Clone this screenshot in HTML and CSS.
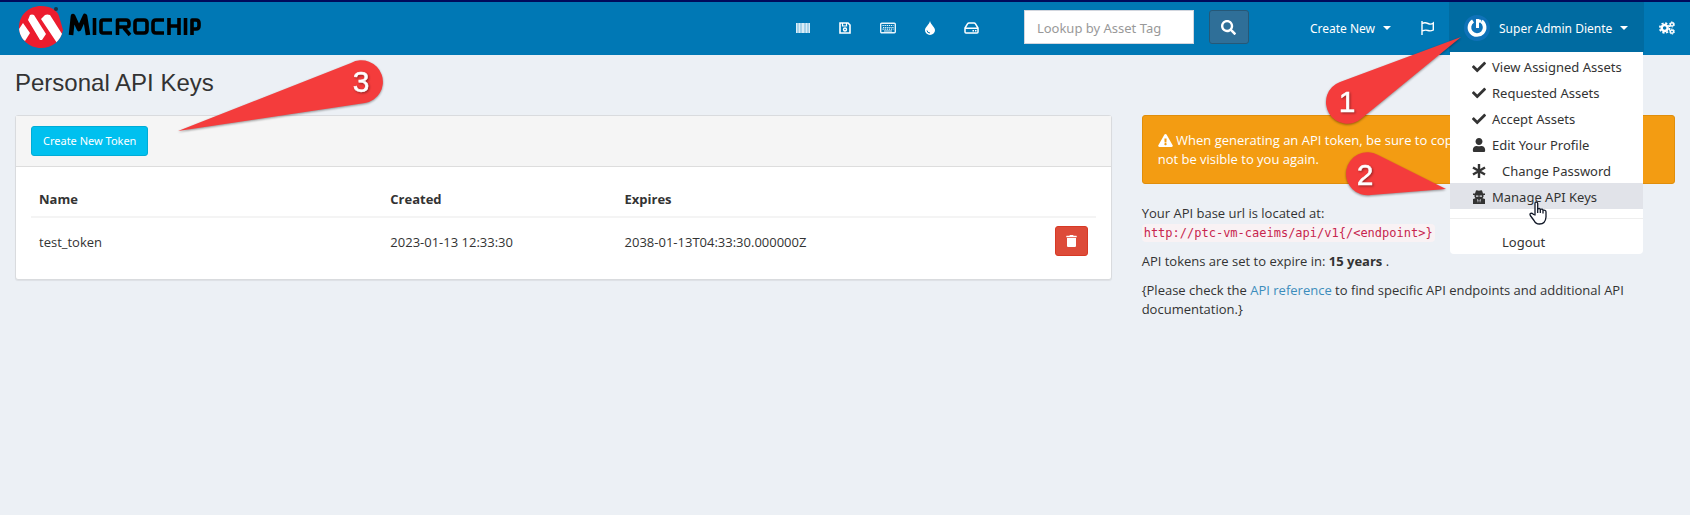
FILE: index.html
```
<!DOCTYPE html>
<html lang="en">
<head>
<meta charset="utf-8">
<title>Personal API Keys</title>
<link rel="stylesheet" href="styles.css">
</head>
<body>
<svg class="defs" aria-hidden="true">
  <symbol id="check" viewBox="0 0 512 512"><path d="M173.898 439.404l-166.4-166.4c-9.997-9.997-9.997-26.206 0-36.204l36.203-36.204c9.997-9.998 26.207-9.998 36.204 0L192 312.69 432.095 72.596c9.997-9.997 26.207-9.997 36.204 0l36.203 36.204c9.997 9.997 9.997 26.206 0 36.204l-294.4 294.401c-9.998 9.997-26.207 9.997-36.204-.001z"/></symbol>
</svg>
<header class="topbar">
  <a class="brand" href="#" aria-label="Microchip">
    <svg class="logo-mark" viewBox="0 0 48 44" aria-hidden="true">
      <defs><clipPath id="disc"><path d="M22 1C31 1 38 5 40 11L44 25C42 36 33 43 22 43C10 43 0 34 0 22S10 1 22 1Z"/></clipPath></defs>
      <g clip-path="url(#disc)">
        <rect width="48" height="44" fill="#ec1c2e"/>
        <path fill="#fff" d="M11 10Q13 9 15 10L27 29L23 35L21 35L9 15ZM26 10Q28 9 31 10L45 32L38 38L22 14ZM0 24L4 18L11 28L6 36L0 32Z"/>
      </g>
      <circle cx="37" cy="4" r="2" fill="#12344a"/>
    </svg>
    <svg class="logo-word" viewBox="0 0 134 26" aria-hidden="true">
      <g fill="none" stroke="#000" stroke-width="3.600" stroke-linejoin="round">
        <path stroke-width="4.600" d="M3 23L5 4L11 17L17 4L20 23"/>
        <path d="M26.500 6V23M44 8H35Q33 8 33 10V19Q33 21 35 21H44M49.500 23V8H58Q61 8 61 11V13Q61 15 58 15H51M56 16L62 23M69 8H76Q79 8 79 11V18Q79 21 76 21H69Q67 21 67 18V11Q67 8 69 8ZM96 8H88Q85 8 85 11V18Q85 21 88 21H96M101 6V23M101 14H111M111 6V23M117.500 6V23M124 23V8H128Q131 8 131 11V14Q131 17 128 17H125"/>
      </g>
    </svg>
  </a>
  <nav class="shortcuts" aria-label="Asset types">
    <a href="#" aria-label="Assets"><svg width="14" height="12" viewBox="0 0 14 12"><path fill="#a6d2ea" d="M0 1h14v10H0z"/><path fill="#fff" opacity=".6" d="M0 1h1v10H0zM3 1h1v10H3zM6 1h2v10H6zM10 1h1v10h-1zM13 1h1v10h-1z"/></svg></a>
    <a href="#" aria-label="Licenses"><svg width="12" height="12" viewBox="0 0 12 12" fill="none" stroke="#fff"><path stroke-width="1.600" d="M1 1h8l2 2v8H1z"/><path stroke-width="1.200" d="M3.500 1v3h4V1"/><circle cx="6" cy="7.500" r="1.500" stroke-width="1.400"/></svg></a>
    <a href="#" aria-label="Accessories"><svg width="16" height="12" viewBox="0 0 16 12" fill="none" stroke="#e8f4fb"><rect x=".7" y="1.200" width="14.600" height="9.600" rx="1" stroke-width="1.400"/><path stroke-width="1.200" stroke-dasharray="1.300 .8" d="M2.500 3.500h11M3 5.500h11M2.500 7.200h11"/><path d="M4 9h8"/></svg></a>
    <a href="#" aria-label="Consumables"><svg width="10" height="14" viewBox="0 0 10 14"><path fill="#fff" d="M5 0C6 4 10 6 10 9.200A5 4.800 0 0 1 0 9.200C0 6 4 4 5 0Z"/><path d="M2 9.500Q2.300 12 5 12" fill="none" stroke="#0078b5"/></svg></a>
    <a href="#" aria-label="Components"><svg width="15" height="12" viewBox="0 0 15 12" fill="none" stroke="#fff" stroke-width="1.500"><path d="M1 6L3.500 2Q4 1 5 1H10Q11 1 11.500 2L14 6V10Q14 11 13 11H2Q1 11 1 10ZM1 6.200H14"/><path d="M8.500 8.700h1.500M11 8.700h1.500"/></svg></a>
  </nav>
  <form class="lookup">
    <input type="text" placeholder="Lookup by Asset Tag" aria-label="Lookup by Asset Tag">
    <button type="button" aria-label="Search"><svg width="15" height="15" viewBox="0 0 512 512" fill="#fff"><path d="M505 442.700L405.300 343c-4.500-4.500-10.600-7-17-7H372c27.600-35.300 44-79.700 44-128C416 93.100 322.900 0 208 0S0 93.100 0 208s93.100 208 208 208c48.300 0 92.700-16.400 128-44v16.300c0 6.400 2.500 12.500 7 17l99.700 99.700c9.400 9.400 24.600 9.400 33.900 0l28.300-28.300c9.400-9.400 9.400-24.600.1-34zM208 336c-70.700 0-128-57.200-128-128 0-70.700 57.200-128 128-128 70.700 0 128 57.200 128 128 0 70.700-57.200 128-128 128z"/></svg></button>
  </form>
  <nav class="account" aria-label="Account">
    <a class="nav-item" href="#">Create New <span class="caret"></span></a>
    <a class="nav-item" href="#" aria-label="Alerts"><svg width="13" height="14" viewBox="0 0 13 14" fill="none" stroke="#fff" stroke-width="1.400"><path d="M1 0V14M1 2.500Q4 1 7 2.500T12.300 2V9Q9.500 10.500 7 9.500T1 10"/></svg></a>
    <div class="user">
      <a class="nav-item user-toggle" href="#">
        <svg width="26" height="26" viewBox="0 0 26 26"><circle cx="13" cy="13" r="13" fill="#0f72b8"/><path d="M9 6A7.600 7.600 0 1 0 17.500 6.300" fill="none" stroke="#fff" stroke-width="3.600"/><path d="M13.500 4V13" stroke="#fff" stroke-width="3"/><path d="M13.500 5.500L17 6.500" stroke="#fff" stroke-width="3"/></svg>
        <span>Super Admin Diente</span> <span class="caret"></span>
      </a>
      <ul class="menu">
        <li><a href="#"><svg><use href="#check"/></svg>View Assigned Assets</a></li>
        <li><a href="#"><svg><use href="#check"/></svg>Requested Assets</a></li>
        <li><a href="#"><svg><use href="#check"/></svg>Accept Assets</a></li>
        <li><a href="#"><svg viewBox="-32 0 512 512"><path d="M224 256c70.700 0 128-57.300 128-128S294.700 0 224 0 96 57.300 96 128s57.300 128 128 128zm89.600 32h-16.700c-22.200 10.200-46.900 16-72.900 16s-50.600-5.800-72.900-16h-16.700C60.200 288 0 348.200 0 422.400V464c0 26.500 21.500 48 48 48h352c26.500 0 48-21.500 48-48v-41.600c0-74.200-60.200-134.400-134.400-134.400z"/></svg>Edit Your Profile</a></li>
        <li><a class="indent" href="#"><svg viewBox="0 0 14 14"><path d="M7 0V14M1 3.500L13 10.500M13 3.500L1 10.500" stroke="#333" stroke-width="2.400"/></svg>Change Password</a></li>
        <li><a class="hovered" href="#"><svg viewBox="0 0 14 14"><path d="M4 0.500Q5 0 7 .8Q9 0 10 .5L11 3.500H13V5H11.500Q12 7 10.500 8.200L13 9V14H1V9L3.500 8.200Q2 7 2.500 5H1V3.500H3Z"/><path fill="#e1e3e9" d="M4 5.500h2.400v1.200H4zM7.600 5.500H10v1.200H7.600zM5 9l1.500 1-.5 3zM9 9l-1.500 1 .5 3z"/></svg>Manage API Keys</a></li>
        <li class="divider" role="separator"></li>
        <li><a class="indent" href="#"><svg></svg>Logout</a></li>
      </ul>
      <svg class="callout one" width="138" height="92" viewBox="0 0 138 92" aria-hidden="true"><path class="pin" d="M136 2L15 47A21.500 21.500 0 1 0 37 83Z"/><text x="22" y="77">1</text></svg>
      <svg class="callout two" width="104" height="48" viewBox="0 0 104 48" aria-hidden="true"><path class="pin" d="M102 39L34 5A21.500 21.500 0 1 0 27 45Z"/><text x="21" y="35">2</text></svg>
      <svg class="pointer" width="18" height="24" viewBox="0 0 18 24" aria-hidden="true"><path fill="#fff" stroke="#111827" stroke-width="1.300" stroke-linejoin="round" d="M6 14V2.500Q6 1 7.300 1T8.700 2.500V8Q11 6.800 11.300 8.500Q13.500 7.300 14 9.300Q17 8.800 17 11V16Q16.500 23 10.500 23Q6.500 23 5 19.500L1.300 14.500Q.5 13 1.700 12.400Q3.500 11.800 4.500 13.500ZM8.700 8V12M11.300 8.500V12M14 9.300V12.500"/></svg>
    </div>
    <a class="nav-item" href="#" aria-label="Settings"><svg width="16" height="14" viewBox="0 0 17 14" fill="none" stroke="#fff"><circle cx="6" cy="7" r="3.200" stroke-width="2.600"/><circle cx="6" cy="7" r="5.200" stroke-width="1.800" stroke-dasharray="2.300 1.780"/><circle cx="13.800" cy="3.200" r="1.700" stroke-width="1.500"/><circle cx="13.800" cy="3.200" r="2.700" stroke-width="1" stroke-dasharray="1.600 1.230"/><circle cx="13.800" cy="10.800" r="1.700" stroke-width="1.500"/><circle cx="13.800" cy="10.800" r="2.700" stroke-width="1" stroke-dasharray="1.600 1.230"/></svg></a>
  </nav>
</header>
<main>
  <h1>Personal API Keys</h1>
  <svg class="callout three" width="206" height="78" viewBox="0 0 206 78" aria-hidden="true"><path class="pin" d="M1 73L174 5A21.500 21.500 0 1 1 188 45Z"/><text x="184" y="34">3</text></svg>
  <div class="columns">
    <section class="box">
      <div class="box-head"><button type="button" class="create">Create New Token</button></div>
      <div class="box-body">
        <table>
          <thead><tr><th class="c-name">Name</th><th class="c-created">Created</th><th>Expires</th><th class="c-action" aria-label="Actions"></th></tr></thead>
          <tbody><tr><td>test_token</td><td>2023-01-13 12:33:30</td><td>2038-01-13T04:33:30.000000Z</td><td class="c-action"><button type="button" class="delete" aria-label="Delete"><svg width="11" height="12" viewBox="0 0 448 512" fill="#fff"><path d="M32 464a48 48 0 0 0 48 48h288a48 48 0 0 0 48-48V128H32zM432 32H312l-9.400-18.700A24 24 0 0 0 281.100 0H166.800a23.720 23.720 0 0 0-21.400 13.300L136 32H16A16 16 0 0 0 0 48v32a16 16 0 0 0 16 16h416a16 16 0 0 0 16-16V48a16 16 0 0 0-16-16z"/></svg></button></td></tr></tbody>
        </table>
      </div>
    </section>
    <aside class="info">
      <div class="alert"><svg width="15" height="13" viewBox="0 0 576 512" fill="#fff" aria-hidden="true"><path d="M569.517 440.013C587.975 472.007 564.806 512 527.940 512H48.054c-36.937 0-59.999-40.055-41.577-71.987L246.423 23.985c18.467-32.009 64.720-31.951 83.154 0l239.940 416.028zM288 354c-25.405 0-46 20.595-46 46s20.595 46 46 46 46-20.595 46-46-20.595-46-46-46zm-43.673-165.346l7.418 136c.347 6.364 5.609 11.346 11.982 11.346h48.546c6.373 0 11.635-4.982 11.982-11.346l7.418-136c.375-6.874-5.098-12.654-11.982-12.654h-63.383c-6.884 0-12.356 5.780-11.981 12.654z"/></svg> When generating an API token, be sure to copy it down immediately as it will not be visible to you again.</div>
      <p>Your API base url is located at:<br><code>http://ptc-vm-caeims/api/v1{/&lt;endpoint&gt;}</code></p>
      <p>API tokens are set to expire in: <strong>15 years</strong> .</p>
      <p>{Please check the <a href="#">API reference</a> to find specific API endpoints and additional API documentation.}</p>
    </aside>
  </div>
</main>
</body>
</html>
```
FILE: styles.css
```
* { box-sizing: border-box; }
body {
  margin: 0;
  min-height: 100vh;
  background: #ecf0f5;
  color: #333;
  font: 13px/19px "Open Sans", "Noto Sans", sans-serif;
}
a { color: #3c8dbc; text-decoration: none; }
.defs { display: none; }
.topbar {
  display: flex;
  height: 55px;
  border-top: 2px solid #000a5c;
  background: #0078b5;
  font-family: "Noto Sans", sans-serif;
}
.brand { display: flex; padding: 3px 0 0 19px; margin-right: auto; }
.logo-mark { width: 48px; height: 44px; }
.logo-word { width: 134px; height: 26px; margin: 7px 0 0 1px; }
.shortcuts { display: flex; align-items: center; gap: 29px; height: 52px; margin-right: 45px; }
.shortcuts a, .shortcuts svg { display: block; }
.lookup { display: flex; gap: 15px; height: 34px; margin: 8px 46px 0 0; }
.lookup input {
  width: 170px;
  padding: 8px 12px 6px;
  border: 1px solid #d2d6de;
  background: #fff;
  font: 13px/18px "Noto Sans", sans-serif;
}
.lookup input::placeholder { color: #999; opacity: 1; }
.lookup button {
  width: 40px;
  padding: 0;
  border: 1px solid #265877;
  border-radius: 3px;
  background: #2f6f98;
}
.lookup svg { vertical-align: middle; }
.account { display: flex; height: 50px; }
.nav-item { display: flex; align-items: center; gap: 8px; height: 50px; padding: 2px 15px 0; color: #fff; font-size: 12px; white-space: nowrap; }
.caret { border: 4px solid transparent; border-top-color: #fff; border-bottom: 0; }
.user { position: relative; width: 195px; }
.user-toggle { background: #006ba1; }
.user-toggle > svg { flex-shrink: 0; margin-right: 1px; }
.menu {
  position: absolute;
  z-index: 2;
  top: 50px;
  left: 1px;
  right: 1px;
  margin: 0;
  padding: 1px 0 0;
  border-radius: 0 0 4px 4px;
  background: #fff;
  list-style: none;
}
.menu a { display: flex; align-items: center; height: 26px; padding: 2px 0 0 22px; color: #333; font-size: 13px; white-space: nowrap; }
.menu svg { width: 14px; height: 14px; margin-right: 6px; fill: #333; }
.menu .indent svg { margin-right: 16px; }
.menu .hovered { background: #e1e3e9; }
.menu .divider { height: 1px; margin: 9px 0; background: #eee; }
.callout { position: absolute; z-index: 3; overflow: visible; }
.pin { fill: #f43c3c; filter: drop-shadow(0 1px 1px #0006); }
.callout text { fill: #fff; font: 30px "Liberation Sans", sans-serif; stroke: #fff; stroke-width: .5; text-anchor: middle; filter: drop-shadow(1px 1px 1px #0006); }
.one { left: -124px; top: 33px; }
.two { left: -105px; top: 148px; }
.three { left: 177px; top: 58px; }
.pointer { position: absolute; z-index: 4; left: 80px; top: 199px; }
h1 { margin: 0; padding: 15px 15px 19px; font: 24px/26px "Liberation Sans", Arial, sans-serif; }
.columns { display: grid; grid-template-columns: 2fr 1fr; align-items: start; }
.box { margin: 0 15px; border: 1px solid #d9dbde; border-radius: 3px; background: #fff; box-shadow: 0 1px 1px #0001; }
.box-head { padding: 10px 15px; border-bottom: 1px solid #ddd; background: #f5f5f5; }
.create, .delete { display: block; height: 30px; border-radius: 3px; color: #fff; }
.create { padding: 0 11px; border: 1px solid #00acd6; background: #00c0ef; font: 11px/18px "Noto Sans", sans-serif; }
.delete { width: 33px; margin-left: auto; padding: 0; border: 1px solid #d73925; background: #dd4b39; }
.delete svg { display: block; margin: 0 auto; }
.box-body { padding: 15px; }
table { width: 100%; border-spacing: 0; table-layout: fixed; }
th, td { padding: 8px; text-align: left; vertical-align: top; }
td { padding-bottom: 6px; line-height: 32px; }
th { padding-bottom: 7px; border-bottom: 2px solid #f4f4f4; }
.c-name { width: 33%; }
.c-created { width: 22%; }
.c-action { width: 60px; }
.info { padding: 0 15px; }
.alert { margin-bottom: 20px; padding: 15px 15px 14px; border: 1px solid #e08e0b; border-radius: 3px; background: #f39c12; color: #fff; }
.alert svg { vertical-align: -2px; }
.info p { margin: 0 0 10px; }
code { padding: 2px; border-radius: 4px; background: #f9f2f4; color: #c7254e; font: 12px "DejaVu Sans Mono", monospace; }
```
